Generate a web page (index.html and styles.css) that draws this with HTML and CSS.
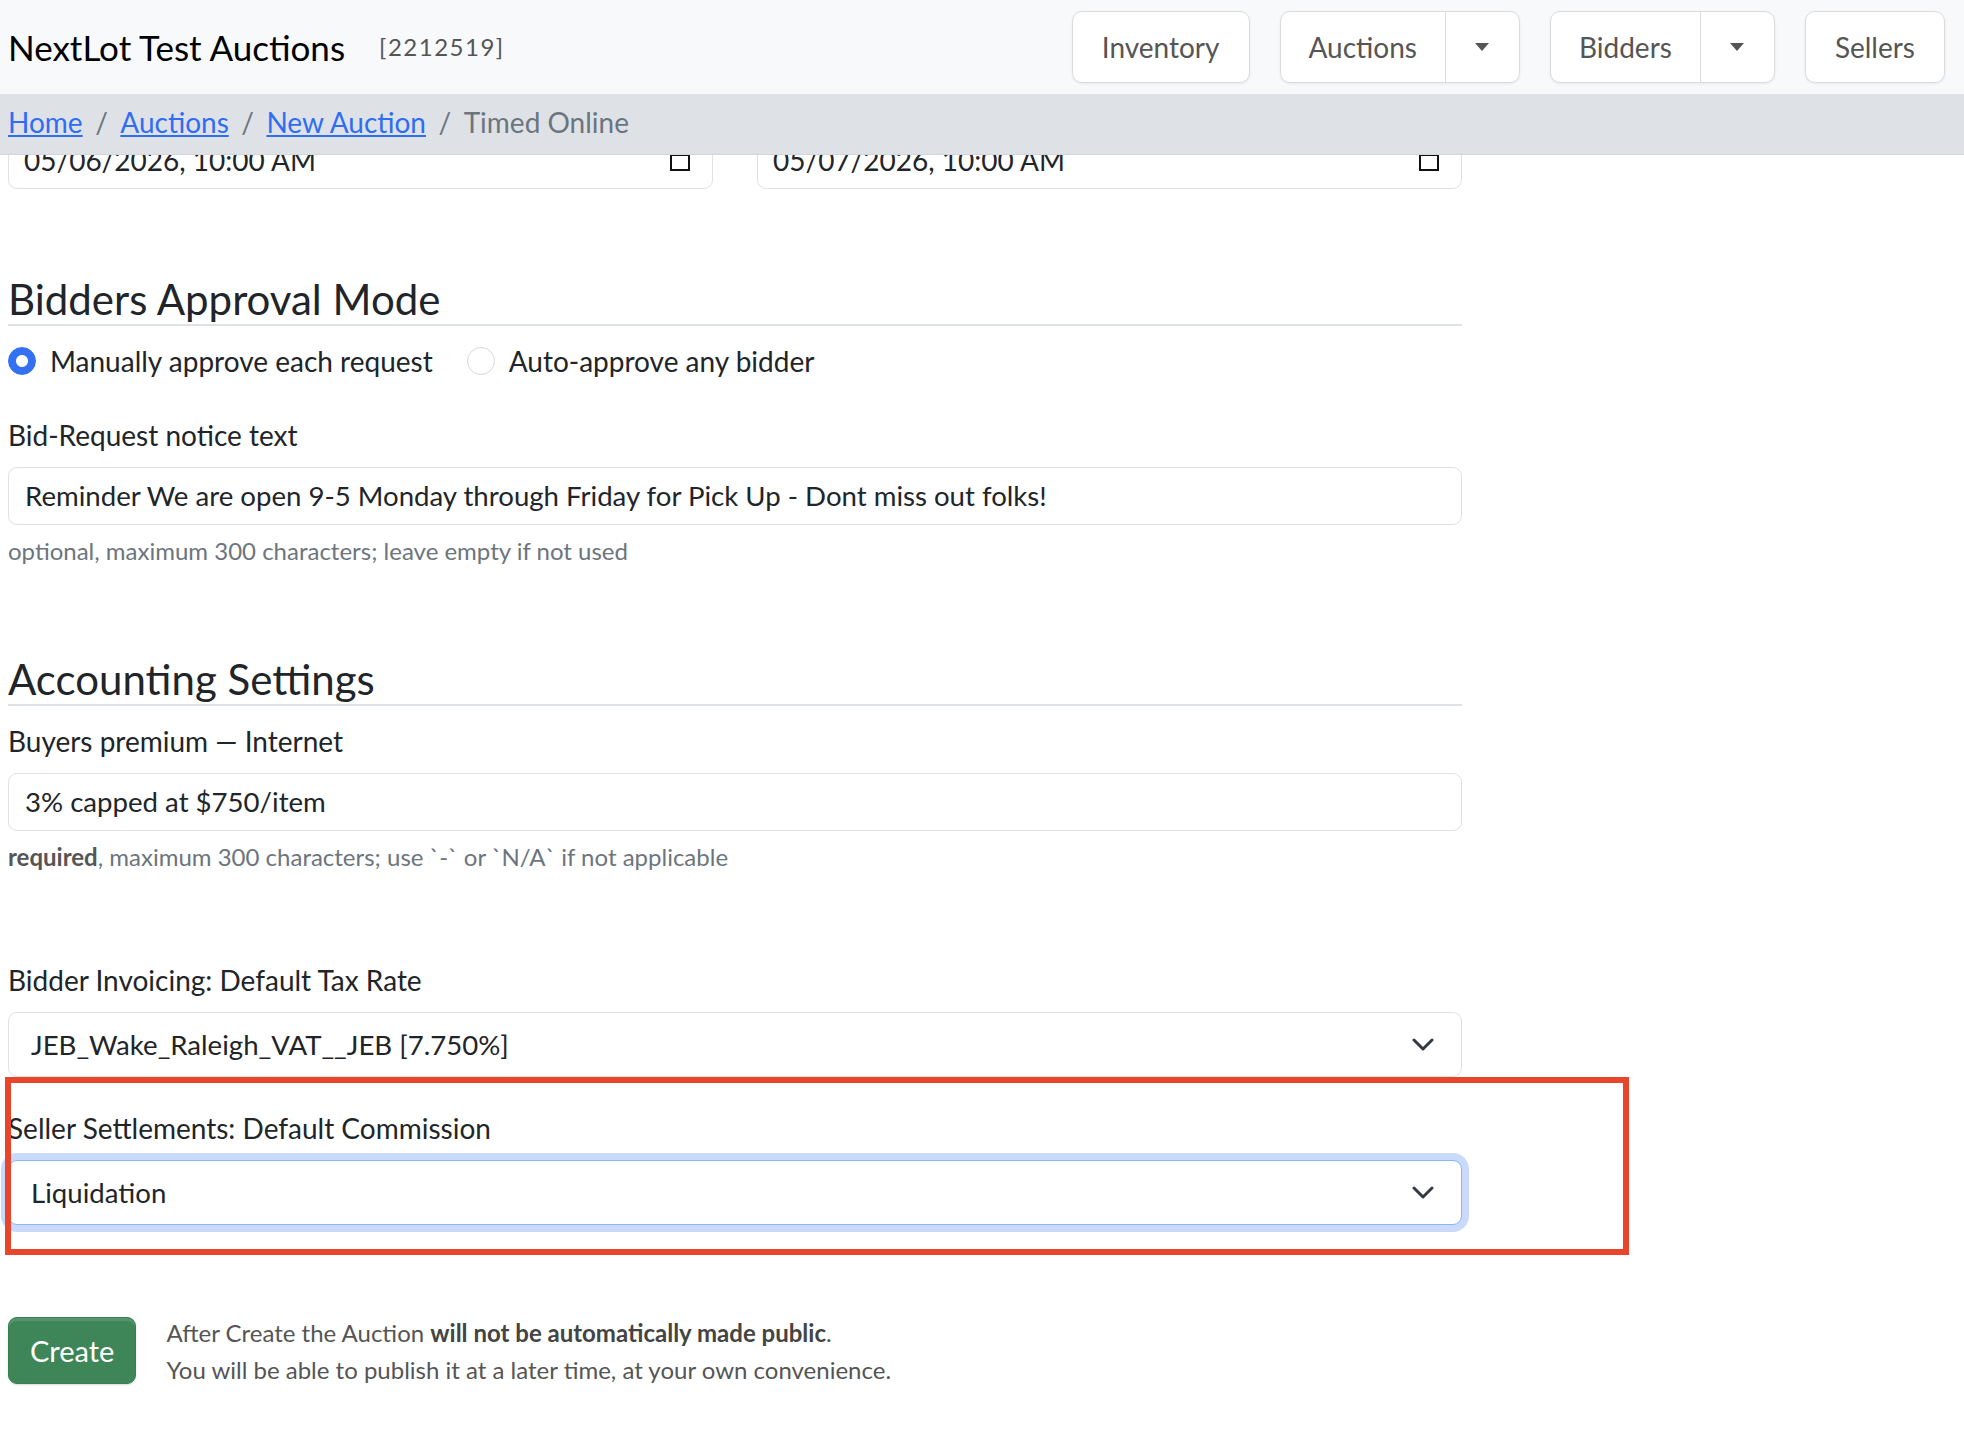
FILE: index.html
```html
<!DOCTYPE html>
<html lang="en">
<head>
  <meta charset="UTF-8" />
  <meta name="viewport" content="width=device-width, initial-scale=1" />
  <title>New Auction - Timed Online</title>
  <link rel="stylesheet" href="styles.css">
</head>
<body>
<header class="topbar">
  <div class="brand">
    <span class="brand-name">NextLot Test Auctions</span>
    <span class="brand-id">[2212519]</span>
  </div>
  <nav class="mainnav">
    <a class="navbtn" href="#">Inventory</a>
    <div class="splitbtn">
      <a class="split-main" href="#">Auctions</a>
      <span class="split-caret"><i class="caret"></i></span>
    </div>
    <div class="splitbtn">
      <a class="split-main" href="#">Bidders</a>
      <span class="split-caret"><i class="caret"></i></span>
    </div>
    <a class="navbtn" href="#">Sellers</a>
  </nav>
</header>
<ol class="crumbs">
  <li><a href="#">Home</a></li>
  <li><a href="#">Auctions</a></li>
  <li><a href="#">New Auction</a></li>
  <li class="active">Timed Online</li>
</ol>
<main class="page">
  <div class="date-row">
    <div class="field date-field">
      <span>05/06/2026, 10:00 AM</span>
      <svg class="cal-icon" width="20" height="22" viewBox="0 0 20 22"><rect x="1" y="2" width="18" height="19" fill="none" stroke="#111" stroke-width="2"/><line x1="1" y1="5" x2="19" y2="5" stroke="#111" stroke-width="4"/></svg>
    </div>
    <div class="field date-field">
      <span>05/07/2026, 10:00 AM</span>
      <svg class="cal-icon" width="20" height="22" viewBox="0 0 20 22"><rect x="1" y="2" width="18" height="19" fill="none" stroke="#111" stroke-width="2"/><line x1="1" y1="5" x2="19" y2="5" stroke="#111" stroke-width="4"/></svg>
    </div>
  </div>

  <h2 class="section-title">Bidders Approval Mode</h2>
  <div class="radio-row">
    <label class="radio-opt"><span class="radio checked"></span>Manually approve each request</label>
    <label class="radio-opt"><span class="radio"></span>Auto-approve any bidder</label>
  </div>

  <label class="label">Bid-Request notice text</label>
  <div class="field">Reminder We are open 9-5 Monday through Friday for Pick Up - Dont miss out folks!</div>
  <div class="help">optional, maximum 300 characters; leave empty if not used</div>

  <h2 class="section-title second">Accounting Settings</h2>
  <label class="label first">Buyers premium &mdash; Internet</label>
  <div class="field">3% capped at $750/item</div>
  <div class="help"><b>required</b>, maximum 300 characters; use `-` or `N/A` if not applicable</div>

  <label class="label spaced">Bidder Invoicing: Default Tax Rate</label>
  <div class="field select-field">
    <span>JEB_Wake_Raleigh_VAT__JEB [7.750%]</span>
    <svg class="chevron" width="22" height="13" viewBox="0 0 22 13"><path d="M2 2 L11 11 L20 2" fill="none" stroke="#343a40" stroke-width="3" stroke-linecap="round" stroke-linejoin="round"/></svg>
  </div>

  <div class="seller-group">
    <div class="highlight"></div>
    <label class="label">Seller Settlements: Default Commission</label>
    <div class="field select-field focused">
      <span>Liquidation</span>
      <svg class="chevron" width="22" height="13" viewBox="0 0 22 13"><path d="M2 2 L11 11 L20 2" fill="none" stroke="#343a40" stroke-width="3" stroke-linecap="round" stroke-linejoin="round"/></svg>
    </div>
  </div>

  <div class="actions">
    <button class="btn-create">Create</button>
    <p class="notice">After Create the Auction <b>will not be automatically made public</b>.<br>You will be able to publish it at a later time, at your own convenience.</p>
  </div>
</main>
</body>
</html>
```

FILE: styles.css
```css
body {
  margin: 0;
  font-family: Lato, "Open Sans", sans-serif;
  font-size: 28px;
  line-height: 1.5;
  color: #212529;
  background: #fff;
}
a {
  text-decoration: none;
}

/* top bar */
.topbar {
  display: flex;
  align-items: center;
  justify-content: space-between;
  height: 94px;
  padding: 0 19px 0 8px;
  background: #f8f9fa;
  box-sizing: border-box;
}
.brand {
  display: flex;
  align-items: center;
}
.brand-name {
  font-size: 35px;
  line-height: 1.2;
  color: #000;
}
.brand-id {
  margin-left: 34px;
  font-size: 24px;
  line-height: 1.2;
  letter-spacing: 1.5px;
  color: #555;
}
.mainnav {
  display: flex;
  gap: 30px;
}
.navbtn,
.splitbtn {
  border: 1px solid #dcdcdc;
  border-radius: 10px;
  background: #fff;
  box-shadow: 0 1px 3px rgba(0,0,0,0.07);
}
.navbtn {
  padding: 14px 29px;
  line-height: 42px;
  color: #555;
}
.splitbtn {
  display: flex;
}
.split-main {
  padding: 14px 28px;
  line-height: 42px;
  color: #555;
}
.split-caret {
  display: flex;
  align-items: center;
  justify-content: center;
  width: 73px;
  border-left: 1px solid #dcdcdc;
}
.caret {
  width: 0;
  height: 0;
  border-left: 7px solid transparent;
  border-right: 7px solid transparent;
  border-top: 8px solid #555;
}

/* breadcrumb */
.crumbs {
  position: relative;
  z-index: 2;
  display: flex;
  list-style: none;
  margin: 0;
  padding: 7px 8px 11px;
  line-height: 42px;
  background: #dee2e6;
  border-bottom: 1px solid #d2d6da;
}
.crumbs a {
  color: #2f6df4;
  text-decoration: underline;
}
.crumbs li + li::before {
  content: "/";
  padding: 0 12.5px;
  color: #6c757d;
}
.crumbs .active {
  color: #6c757d;
}

/* form */
.page {
  width: 1454px;
  padding: 0 8px;
}
.field {
  border: 1px solid #dee2e6;
  border-radius: 9px;
  padding: 7px 16px;
  font-size: 27.6px;
  line-height: 42px;
  background: #fff;
  color: #212529;
}
.date-row {
  display: grid;
  grid-template-columns: 1fr 1fr;
  gap: 44px;
  margin-top: -24px;
}
.date-field {
  display: flex;
  align-items: center;
  justify-content: space-between;
  padding-left: 15px;
  padding-right: 22px;
  font-size: 28px;
}
.section-title {
  margin: 85px 0 0;
  font-size: 42px;
  font-weight: 400;
  line-height: 50px;
  border-bottom: 2px solid #dee2e6;
}
.section-title.second {
  margin-top: 85px;
}
.radio-row {
  display: flex;
  align-items: center;
  margin-top: 14px;
}
.radio-opt {
  display: flex;
  align-items: center;
  margin-right: 34px;
}
.radio {
  width: 28px;
  height: 28px;
  margin-right: 14px;
  border: 1px solid #d5d9dd;
  border-radius: 50%;
  box-sizing: border-box;
  background: #fff;
}
.radio.checked {
  border-color: #3370f2;
  background: radial-gradient(circle, #fff 0 5.5px, #3370f2 6.5px);
}
.label {
  display: block;
  margin-top: 32px;
  margin-bottom: 11px;
}
.label.first {
  margin-top: 14px;
}
.label.spaced {
  margin-top: 84px;
}
.help {
  margin-top: 8px;
  font-size: 24px;
  line-height: 36px;
  color: #6c757d;
}
.help b {
  color: #555;
}
.select-field {
  display: flex;
  align-items: center;
  justify-content: space-between;
  padding: 10.5px 27px 10.5px 22px;
}
.select-field.focused {
  border-color: #86b7fe;
  box-shadow: 0 0 0 7px #c9dafc;
}
.seller-group {
  position: relative;
  padding-top: 0.1px;
}
.seller-group .label {
  margin-top: 30px;
}
.highlight {
  position: absolute;
  top: 0;
  left: -3px;
  width: 1624px;
  height: 178px;
  border: 6px solid #e8452b;
  box-sizing: border-box;
  z-index: 1;
  pointer-events: none;
}

/* footer actions */
.actions {
  display: flex;
  align-items: flex-start;
  gap: 30px;
  margin-top: 92px;
}
.btn-create {
  padding: 10px 21px;
  font-family: inherit;
  font-size: 29px;
  line-height: 45px;
  color: #fff;
  background: #3e8658;
  border: 1px solid #3a7f53;
  border-radius: 9px;
  box-shadow: inset 0 3px 0 rgba(255,255,255,0.12), 0 1px 2px rgba(0,0,0,0.15);
}
.notice {
  margin: -3px 0 0;
  font-size: 24px;
  line-height: 37px;
  color: #555;
}
.notice b {
  color: #444;
}
```
